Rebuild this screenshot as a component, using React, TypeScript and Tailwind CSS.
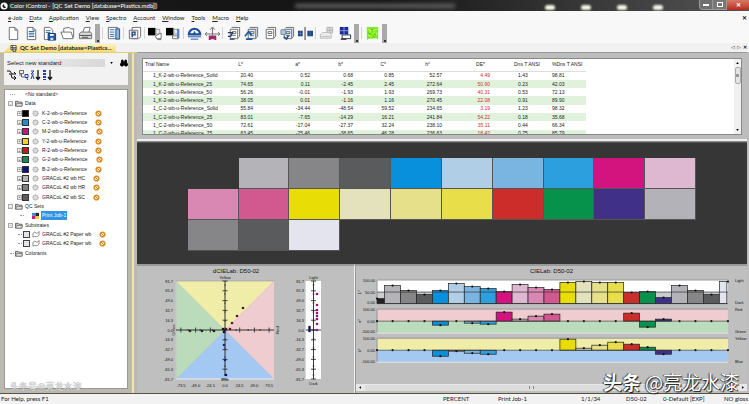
import { ReactNode } from "react";
import { Binoculars } from "lucide-react";

const menus = ["e-Job", "Data", "Application", "View", "Spectro", "Account", "Window", "Tools", "Macro", "Help"];

// Header and body cells carry their own alignment per column
const columns = [
  { title: "Trial Name", head: "pl-0.5 text-left", cell: "pl-2.5" },
  { title: "L*", head: "pr-2.5 text-right", cell: "text-right" },
  { title: "a*", head: "pr-2.5 text-right", cell: "text-right" },
  { title: "b*", head: "pr-2.5 text-right", cell: "text-right" },
  { title: "C*", head: "pr-2 text-right", cell: "text-right" },
  { title: "h°", head: "pr-3 text-right", cell: "text-right" },
  { title: "DE*", head: "pr-[5px] text-right", cell: "text-right text-[#d02c2c]" },
  { title: "Dns T ANSI", head: "pl-6 text-left", cell: "pl-7" },
  { title: "%Dns T ANSI", head: "pl-2 text-left", cell: "pl-2" },
];

const trials = [
  ["1_K-2-wb-u-Reference_Solid", "20.40", "0.52", "0.68", "0.85", "52.57", "4.49", "1.43", "98.81"],
  ["1_K-2-wb-u-Reference_25", "74.65", "0.11", "-2.45", "2.45", "272.64", "50.90", "0.23", "42.03"],
  ["1_K-2-wb-u-Reference_50", "56.26", "-0.01", "-1.93", "1.93", "269.73", "40.31", "0.53", "72.13"],
  ["1_K-2-wb-u-Reference_75", "38.05", "0.01", "-1.16", "1.16", "270.45", "22.08", "0.91", "89.90"],
  ["1_C-2-wb-u-Reference_Solid", "55.84", "-34.44", "-48.54", "59.52", "234.65", "3.19", "1.23", "98.32"],
  ["1_C-2-wb-u-Reference_25", "83.01", "-7.65", "-14.29", "16.21", "241.84", "54.22", "0.18", "35.68"],
  ["1_C-2-wb-u-Reference_50", "72.61", "-17.04", "-27.37", "32.24", "238.10", "35.11", "0.44", "66.34"],
  ["1_C-2-wb-u-Reference_75", "63.45", "-25.46", "-38.65", "46.28", "236.63", "18.42", "0.75", "85.79"],
];

const references = [
  { name: "K-2-wb-u-Reference", color: "#000000" },
  { name: "C-2-wb-u-Reference", color: "#1592c8" },
  { name: "M-2-wb-u-Reference", color: "#d0107c" },
  { name: "Y-2-wb-u-Reference", color: "#f0d818" },
  { name: "R-2-wb-u-Reference", color: "#d01414" },
  { name: "G-2-wb-u-Reference", color: "#108c54" },
  { name: "B-2-wb-u-Reference", color: "#10107c" },
  { name: "GRACoL #2 wb HC", color: "#b4b4b4" },
  { name: "GRACoL #2 wb HR", color: "#808080" },
  { name: "GRACoL #2 wb SC", color: "#5c5c5c" },
];

// L, a and b are bar heights in chart units
const patches = [
  { color: "#222222", L: 5, a: 0, b: 0 },
  { color: "#b4b4b8", L: 18, a: 0, b: 0 },
  { color: "#868688", L: 13, a: 0, b: 0 },
  { color: "#5a5b5c", L: 9, a: 0, b: 0 },
  { color: "#0890dc", L: 13, a: -4, b: -6 },
  { color: "#b0cfe6", L: 20, a: 0, b: -1 },
  { color: "#7ab4e0", L: 17, a: -2, b: -3 },
  { color: "#2ca0de", L: 15, a: -3, b: -4 },
  { color: "#d4147e", L: 12, a: 9, b: 0 },
  { color: "#deb8d0", L: 19, a: 2, b: 0 },
  { color: "#d888b2", L: 16, a: 5, b: 0 },
  { color: "#d25890", L: 14, a: 7, b: 0 },
  { color: "#e8de06", L: 21, a: 0, b: 11 },
  { color: "#e4e2bc", L: 22, a: 0, b: 2 },
  { color: "#e6e08a", L: 21, a: 0, b: 5 },
  { color: "#e8de4a", L: 21, a: 0, b: 8 },
  { color: "#cc2c2a", L: 11, a: 8, b: 6 },
  { color: "#06924a", L: 12, a: -6, b: 3 },
  { color: "#403088", L: 6, a: 2, b: -4 },
  { color: "#b2b2b8", L: 18, a: 0, b: 0 },
  { color: "#868688", L: 13, a: 0, b: 0 },
  { color: "#5a5b5c", L: 9, a: 0, b: 0 },
  { color: "#e4e4ee", L: 22, a: 0, b: 0 },
];

const scale = ["81.7", "65.3", "49.0", "32.7", "16.3", "0.0", "-16.3", "-32.7", "-49.0", "-65.3", "-81.7"];

const scatter = [
  [105, 42, "#50103c"], [99, 50, "#601048"], [94, 57, "#601048"], [92, 63, "#601030"], [88, 63, "#601030"],
  [76, 65, "#401030"], [64, 65, "#202040"], [52, 65, "#501028"], [86, 79, "#202070"], [87, 94, "#202070"],
  [88, 109, "#101060"], [86, 66, "#101030"], [85, 63, "#101030"],
] as const;

function Icon({ children, label }: { children: ReactNode; label: string }) {
  return (
    <button type="button" aria-label={label} className="flex h-4 w-[18px] items-center justify-center">
      <svg viewBox="0 0 16 16" className="h-[15px] w-[15px]" fill="none" stroke="#6c6c6c">
        {children}
      </svg>
    </button>
  );
}

const Separator = () => <div className="flex w-[3px] justify-center"><div className="h-3 w-px bg-[#d4d4d4]" /></div>;

const Handle = () => (
  <div className="mx-px flex h-[19px] w-[5px] items-end justify-center bg-[#a9a9a9] pb-px">
    <div className="h-0.5 w-0.5 bg-[#333]" />
  </div>
);

// Stacked pages used by several of the toolbar icons
const Pages = ({ fill = "#fff" }: { fill?: string }) => (
  <>
    <path d="M6 1.500h8.500v9.500l-2 2" fill={fill} />
    <path d="M4.500 3.500h8v10h-8z" fill={fill} />
    <path d="M6.500 6h4v2h-4zM6.500 10h4" />
  </>
);

function Toolbar() {
  return (
    <div className="flex h-5 items-center bg-[#f8f8f8] pl-1">
      <Icon label="New"><path d="M3.500 1.500h6l3 3v10h-9zM9.500 1.500v3h3" fill="#fff" /></Icon>
      <Icon label="New standard">
        <path d="M3.500 1.500h6l3 3v10h-9zM9.500 1.500v3h3" fill="#fff" />
        <path d="M5 6h6M5 8.500h6M5 11h6" stroke="#2c6aa8" strokeWidth="1.300" />
      </Icon>
      <Icon label="Save">
        <path d="M2.500 1.500h6l3 3v10h-9z" fill="#fff" />
        <path d="M4 5h5M4 7h5" stroke="#2c6aa8" />
        <path d="M6.500 8h8v7h-8z" fill="#2458a0" stroke="#1c3c70" />
        <path d="M8.500 8.500h4v2h-4z" fill="#fff" stroke="none" />
        <path d="M9 12.500h3v2.500H9z" fill="#cde" stroke="none" />
      </Icon>
      <Icon label="Open">
        <path d="M4 6.500v-4l6-1 1 1.500h3.500v9" fill="#fff" />
        <path d="M1 6.500h11l2 7H3.500z" fill="#fff" />
      </Icon>
      <Icon label="Print">
        <path d="M5 7l2-5.500h6L11.500 7" fill="#fff" />
        <path d="M1.500 8l2-1.500h10l1 1.500v5.500h-13z" fill="#ddd" />
        <path d="M2 10h12M4 12h7" stroke="#444" />
      </Icon>
      <Handle />
      <Separator />
      <Icon label="Report">
        <path d="M2.500 1.500h10v12h-10z" fill="#fff" />
        <path d="M4 4h5M4 6.500h5M4 9h5M4 11h5" stroke="#2c6aa8" />
        <path d="M10.500 3h4v11h-4z" fill="#8db6e0" stroke="#24508c" />
      </Icon>
      <Separator />
      <Icon label="Page setup">
        <path d="M5.500 1.500h9v10l-2 2h-7z" fill="#fff" />
        <path d="M2.500 4.500h9v9h-9z" fill="#eef" />
        <path d="M5.500 12V6.500h3v3h-3" stroke="#204a80" strokeWidth="1.500" />
      </Icon>
      <Separator />
      <Icon label="Measure standard">
        <path d="M0 2h8v8H0z" fill="#000" stroke="none" />
        <path d="M8.500 3.500h4v5h-4z" fill="#eee" stroke="#999" />
        <path d="M8 10.500l6-3v6h-5z" fill="#fff" /><path d="M10 14.500h4" />
      </Icon>
      <Icon label="Measure trial">
        <path d="M0 2h8v8H0z" fill="#000" stroke="none" />
        <path d="M8.500 3.500h4v5h-4z" fill="#eee" stroke="#999" />
        <path d="M7 10.500h6v3H7z" fill="#fff" />
        <path d="M13 3v10" stroke="#5585c8" strokeWidth="2.500" />
      </Icon>
      <Separator />
      <Icon label="Calibrate">
        <path d="M2 9a6 6 0 0 1 12 0z" fill="#fff" stroke="#2050a0" strokeWidth="2.500" />
        <path d="M8 5l-2 4h4z" fill="#2050a0" stroke="none" />
        <path d="M1 11.500h14M4 14h8" stroke="#2050a0" />
      </Icon>
      <Icon label="Tolerance">
        <path d="M8 10V2M5.500 4L8 1l2.500 3M0 8.500h16M2 6.500L0 8.500l2 2M14 6.500l2 2-2 2" />
        <path d="M5 15v-4h2v2h2v-2h2v4" stroke="#a0286c" strokeWidth="2" />
      </Icon>
      <Separator />
      <Icon label="Copy measurement"><Pages /><path d="M2 7h5l-2 4H2M4 14h5" stroke="#203c68" strokeWidth="1.400" /></Icon>
      <Icon label="Store measurement"><Pages fill="#dce9f6" /><path d="M1 11l4-5 3 4M2 14h7" stroke="#1c5a98" strokeWidth="1.800" /></Icon>
      <Icon label="Pages"><Pages /></Icon>
      <Icon label="Store pages"><Pages fill="#dce9f6" /><path d="M1 4h5v5H1z" fill="#a8c8e6" stroke="#789" /><path d="M4 11.500l3 2.500 2-4" stroke="#1c4c80" strokeWidth="1.600" /></Icon>
      <Icon label="Compare">
        <path d="M0 5h5v6H0zM10 5h6v6h-6z" fill="#1c4484" stroke="none" />
        <path d="M7.500 1v14" stroke="#333" /><path d="M2.500 5v6M0 8h5M13 5v6" stroke="#6c90c8" strokeWidth=".6" />
      </Icon>
      <Separator />
      <Icon label="Print preview">
        <path d="M8.500 1.500h6v6h-6zM11.500 1.500v6M8.500 4.500h6" fill="#ddd" stroke="#b0b0b0" />
        <path d="M2 9l2-2h7l2 2v4H1.500V9zM3 11h9" fill="#eee" stroke="#b8b8b8" />
      </Icon>
      <Icon label="Print job">
        <path d="M3 1h9v8H3z" fill="#1c2a98" stroke="none" />
        <path d="M7.500 1v8M3 5h9" stroke="#8ca0e0" />
        <path d="M5.500 9.500h9v4h-9z" fill="#fff" stroke="#234" /><path d="M4 14h6" stroke="#234" strokeWidth="1.500" />
      </Icon>
      <Handle />
      <Separator />
      <Icon label="Color map">
        <path d="M2 1h12v13l-2-1-8 .5L2 15z" fill="#7ce820" stroke="none" />
        <path d="M3 3l3 2M7 2l-2 6M9 5l4-2M8 9l3-3M11 11l2-4M3 10l4 1" stroke="#d8ff50" />
        <path d="M6 3l2 1M10 8l1 2M4 7l2 2M9 11l1 1" stroke="#20a848" />
      </Icon>
      <Handle />
    </div>
  );
}

function TitleBar() {
  return (
    <header className="relative flex h-[11px] items-center overflow-hidden bg-linear-to-r from-[#181818] via-[#151515] to-[#555] font-[Lato,sans-serif] text-[6px] text-white">
      <div className="absolute inset-0 flex items-center gap-[26px] pl-[545px]">
        {[0, 1, 2, 3].map((i) => (
          <span key={i} className="mt-1 h-[5px] w-2.5 rounded-full bg-[#f4f4e4] blur-[1px]" />
        ))}
      </div>
      <div className="absolute inset-0 flex items-center pl-[295px]">
        <span className="h-1 w-[160px] bg-[#666] blur-[2px]" />
      </div>
      <svg viewBox="0 0 10 10" className="relative h-2 w-[9px]">
        <circle cx="4.500" cy="5" r="4.500" fill="#f4f4f4" />
        <path d="M4.500 2.500A2.500 2.500 0 1 0 7 6.500L4.500 5z" fill="#111" />
      </svg>
      <h1 className="relative rounded-full bg-[#55555588] px-px leading-[8px] whitespace-nowrap">
        Color iControl - [QC Set Demo [database=Plastics.mdb]]
      </h1>
      <div className="relative ml-auto flex h-2.5 self-start text-[6px] leading-none">
        <button type="button" aria-label="Minimize" className="flex w-3.5 items-center justify-center rounded-bl-sm border border-t-0 border-[#999] bg-[#707070]">
          <span className="h-0.5 w-1.5 bg-white" />
        </button>
        <button type="button" aria-label="Restore" className="flex w-3.5 items-center justify-center border-r border-b border-[#999] bg-[#787878]">
          <span className="h-[5px] w-1.5 border border-white" />
        </button>
        <button type="button" aria-label="Close" className="w-[22px] rounded-br-sm bg-linear-to-b from-[#d87868] to-[#b82818] font-bold">✕</button>
      </div>
    </header>
  );
}

function Recycle() {
  return (
    <svg viewBox="0 0 8 8" className="ml-2 h-[7px] w-[7px] shrink-0">
      <circle cx="4" cy="4" r="2.700" fill="#fff3d8" stroke="#e08c20" strokeWidth="1.700" />
      <path d="M2.500 2.500l3 3" stroke="#c87010" strokeWidth="1" />
    </svg>
  );
}

function Folder() {
  return (
    <svg viewBox="0 0 9 8" className="mr-0.5 h-[7px] w-2 shrink-0">
      <path d="M.5 7V1.500h3l1 1H8V7z" fill="#bbb" stroke="#444" strokeWidth=".8" />
      <path d="M2 4h6.500L7.500 7H.7z" fill="#ddd" stroke="#555" strokeWidth=".6" />
    </svg>
  );
}

function Expander({ sign }: { sign: string }) {
  return (
    <button type="button" aria-label="Toggle" className="mr-0.5 flex h-[5px] w-[5px] shrink-0 items-center justify-center border border-[#aaa] bg-[#eee] text-[4px] leading-none text-black">
      {sign}
    </button>
  );
}

function Branch({ label, open = true }: { label: string; open?: boolean }) {
  return (
    <li className="flex flex-1 items-center pl-[3px]">
      {open ? <Expander sign="-" /> : <span className="mr-px ml-0.5 w-1 border-t border-dotted border-[#999]" />}
      <Folder />
      {label}
    </li>
  );
}

function Sidebar() {
  return (
    <aside className="flex w-[137px] shrink-0 flex-col border-t border-[#dcd070] bg-[#bcbab0] pr-[3px] pl-1">
      <div className="flex flex-1 flex-col border-r-2 border-[#eeeaa0] pb-1">
        <div className="mr-1 h-8 bg-[#f2f2f2] pt-[5px] pl-[3px]">
          <div className="flex h-[9px] items-center">
            <select
              aria-label="Standard"
              className="h-2 w-[98px] appearance-none bg-linear-to-r from-[#f2f2f2] to-[#d8d8d8] text-[6px] leading-[8px] text-[#222]"
            >
              <option>Select new standard</option>
            </select>
            <svg viewBox="0 0 4 3" className="ml-[5px] h-0.5 w-[3px]"><path d="M0 0h4L2 3z" /></svg>
            <button type="button" aria-label="Find" className="ml-[7px]">
              <Binoculars className="h-2 w-2 fill-black text-black" strokeWidth={3} />
            </button>
          </div>
          <svg viewBox="0 0 50 12" className="mt-0.5 h-3 w-[50px]" fill="none" stroke="#111">
            <path d="M0 2h3l2 3h4M2 5h2l1 4h3M7 7l2 2-2 2M7 3l2 2" />
            <path d="M12.500 1.500h4v3h-4zM14.500 5v3h3M12 6h2" stroke="#666" />
            <path d="M18 5.500h3v3h-3zM19 8l2 3" stroke="#2838a0" />
            <path d="M24 2h3l-3 3h3M24 10l1.500-4 1.500 4" stroke="#2838a0" />
            <path d="M31 1v9M29 8l2 2.500L33 8M43 1v9M41 8l2 2.500L45 8" strokeWidth="1.300" />
            <path d="M37.500 1v10" stroke="#2838b0" strokeWidth="3" strokeDasharray="2 1" />
          </svg>
        </div>
        <div className="mt-1 mr-1 flex-1 border border-[#999] bg-white">
          <ul className="flex h-[168px] flex-col text-[5px] leading-[7px] whitespace-nowrap text-[#222]">
            <li className="flex flex-1 items-center pl-[5px]">
              <span className="mr-2.5 w-[5px] border-t border-dotted border-[#999]" />
              &lt;No standard&gt;
            </li>
            <Branch label="Data" />
            {references.map((r) => (
              <li key={r.name} className="flex flex-1 items-center pl-3">
                <Expander sign="+" />
                <span className="-ml-0.5 h-[7px] w-[7px] shrink-0 border border-[#333]" style={{ background: r.color }} />
                <svg viewBox="0 0 8 8" className="mx-[3px] h-[7px] w-[7px] shrink-0">
                  <circle cx="4" cy="4" r="2.800" fill="#ddd" stroke="#aaa" strokeWidth="1.500" strokeDasharray="1.500 .5" />
                </svg>
                {r.name}
                <Recycle />
              </li>
            ))}
            <Branch label="QC Sets" />
            <li className="flex flex-1 items-center pl-[15px]">
              <span className="mr-2 w-1 border-t border-dotted border-[#999]" />
              <svg viewBox="0 0 8 8" className="mr-0.5 h-[7px] w-[7px]">
                <path d="M0 1h4v3H0z" fill="#189cd8" /><path d="M4 1h4v4H4z" fill="#222" />
                <path d="M0 4h4v4H0z" fill="#d01480" /><path d="M4 5h4v3H4z" fill="#e8d818" />
              </svg>
              <span className="bg-[#3093e4] px-px leading-[9px] text-white">Print Job-1</span>
            </li>
            <Branch label="Substrates" />
            {["a", "b"].map((id) => (
              <li key={id} className="flex flex-1 items-center pl-[13px]">
                <span className="mr-px w-1 border-t border-dotted border-[#999]" />
                <span className="h-[7px] w-[7px] shrink-0 border border-[#444] bg-[#e4e4e8]" />
                <svg viewBox="0 0 9 8" className="mr-0.5 ml-0.5 h-[7px] w-2 shrink-0">
                  <path d="M1 7V2.500q2-2.500 4 0q2 .5 3-2v4q-1 2-3 2q-2-1-4 .5z" fill="#fff" stroke="#666" strokeWidth=".8" />
                </svg>
                GRACoL #2 Paper wb
                <Recycle />
              </li>
            ))}
            <Branch label="Colorants" open={false} />
          </ul>
        </div>
      </div>
    </aside>
  );
}

function TrialTable() {
  return (
    <div className="h-[89px] border-t border-b-2 border-t-[#999] border-b-[#eee] bg-[#bdbdbd] px-[5px] pt-[5px]">
      <div className="flex h-[77px] items-start overflow-hidden border border-[#888] bg-white">
        <table className="h-[79px] w-[443px] shrink-0 table-fixed border-collapse text-[5px] leading-[7px] whitespace-nowrap text-[#222]">
          <colgroup>
            <col className="w-[82px]" />
            <col className="w-[28px]" />
            <col className="w-[57px]" />
            <col className="w-[43px]" />
            <col className="w-[41px]" />
            <col className="w-[48px]" />
            <col className="w-[48px]" />
            <col className="w-[54px]" />
            <col />
          </colgroup>
          <thead>
            <tr className="h-3 border-b border-[#ddd]">
              {columns.map((c) => (
                <th key={c.title} className={`font-normal ${c.head}`}>{c.title}</th>
              ))}
            </tr>
          </thead>
          <tbody>
            {trials.map((t) => (
              <tr key={t[0]} className="even:bg-[#e0f2dc]">
                {t.map((v, i) => (
                  <td key={i} className={columns[i].cell}>{v}</td>
                ))}
              </tr>
            ))}
          </tbody>
        </table>
        <div className="ml-auto flex h-full w-[7px] flex-col items-center justify-between bg-[#f0f0f0] py-[3px] text-[#444]">
          <svg viewBox="0 0 4 3" className="h-0.5 w-[3px]"><path d="M0 3h4L2 0z" /></svg>
          <span className="mt-[3px] mb-auto flex h-[17px] w-[6px] items-center justify-center rounded-xs border border-[#aaa] bg-[#e4e4e4]">
            <span className="h-[3px] w-[3px] bg-[#999]" />
          </span>
          <svg viewBox="0 0 4 3" className="h-0.5 w-[3px]"><path d="M0 0h4L2 3z" /></svg>
        </div>
      </div>
    </div>
  );
}

function Swatches() {
  return (
    <div className="grid h-[122px] auto-rows-[31px] grid-cols-12 border-t border-[#555] bg-[#363636] pt-[15px]">
      {patches.map((p, i) => (
        <div
          key={i}
          className={
            i === 0
              ? "col-start-2"
              : i % 10 === 0
                ? "col-start-2 border-r border-b border-[#555]"
                : "border-r border-b border-[#555]"
          }
          style={{ background: i === 0 ? "#363636" : p.color }}
        />
      ))}
    </div>
  );
}

function ScatterChart() {
  return (
    <svg viewBox="0 0 215 126" className="h-[126px] w-[215px]" fontFamily="Liberation Sans, sans-serif" fontSize="4" fill="#111">
      <text x="98" y="7" fontSize="6" textAnchor="middle">dCIELab: D50-02</text>
      <path d="M38 15h98L87 64z" fill="#efeda8" />
      <path d="M136 15v98L87 64z" fill="#efcccf" />
      <path d="M38 113h98L87 64z" fill="#a3c8f2" />
      <path d="M38 15v98l49-49z" fill="#bbdcbb" />
      <path d="M38 15v98h98M168 15v98" fill="none" stroke="#eee" />
      <path d="M38 15v98M38 15h98" fill="none" stroke="#999" strokeWidth=".6" />
      <rect x="168" y="15" width="15" height="98" fill="#fff" />
      <path d="M87 15v95M38 64h98M175.500 15v98M168 64h15" stroke="#222" strokeWidth=".9" />
      {scale.map((s, i) => (
        <g key={s}>
          <text x="35" y={16.500 + i * 9.800} textAnchor="end">{s}</text>
          <text x="166" y={16.500 + i * 9.800} textAnchor="end">{s}</text>
          <path d={`M84.500 ${15 + i * 9.800}h5M173 ${15 + i * 9.800}h5`} stroke="#222" strokeWidth=".8" />
          <path d={`M86 ${19 + i * 9}h2M174.500 ${19 + i * 9}h2`} stroke="#222" strokeWidth=".6" />
        </g>
      ))}
      {["-73.5", "-49.0", "-24.5", "0.0", "24.5", "49.0", "73.5"].map((s, i) => (
        <g key={s}>
          <text x={42.900 + i * 14.700} y="121" textAnchor="middle">{s}</text>
          <path d={`M${42.900 + i * 14.700} 61.500v5M${50.200 + i * 12} 63v2`} stroke="#222" strokeWidth=".8" />
        </g>
      ))}
      <text x="87" y="13" textAnchor="middle">Yellow</text>
      <text x="87" y="115" textAnchor="middle">Blue</text>
      <text x="37" y="64" textAnchor="middle" transform="rotate(-90 37 64)">Green</text>
      <text x="141" y="64" textAnchor="middle" transform="rotate(-90 141 64)">Red</text>
      <text x="175.500" y="13" textAnchor="middle">Light</text>
      <text x="175.500" y="119" textAnchor="middle">Dark</text>
      {scatter.map(([x, y, c]) => (
        <circle key={`${x}-${y}`} cx={x} cy={y} r="1.300" fill={c} />
      ))}
      {[28, 39, 44, 47, 50, 53, 58, 64].map((y) => (
        <circle key={y} cx="179" cy={y} r="1.300" fill="#941484" />
      ))}
      {[61, 63, 65].map((y) => (
        <circle key={y} cx="171.500" cy={y} r="1.300" fill="#101050" />
      ))}
    </svg>
  );
}

// Left edge and width of the nth bar; the first and the last are cut by the frame
const barX = (i: number) => (i === 0 ? 21 : 28.500 + (i - 1) * 15.900);
const barWidth = (i: number) => (i === 0 || i === patches.length - 1 ? 7.500 : 15.900);

function Bars({ base, channel }: { base: number; channel: "L" | "a" | "b" }) {
  return (
    <g>
      {patches.map((p, i) => {
        const v = p[channel];
        const x = barX(i);
        const cx = i === 0 ? x : i === patches.length - 1 ? 371 : x + 8;
        return (
          <g key={i}>
            <rect x={x} y={v > 0 ? base - v : base} width={barWidth(i)} height={Math.abs(v)} fill={p.color} stroke="#222" strokeWidth=".7" />
            <circle cx={cx} cy={base - v} r="1.100" fill="#111" />
          </g>
        );
      })}
    </g>
  );
}

function BarChart() {
  return (
    <svg viewBox="0 0 390 118" className="w-full" fontFamily="Liberation Sans, sans-serif" fontSize="4" fill="#111">
      <text x="195" y="7" fontSize="6" textAnchor="middle">CIELab: D50-02</text>
      <path d="M21 14h350v12H21z" fill="#fff" />
      <path d="M21 26h350v11.500H21z" fill="#c9ccd0" />
      <path d="M21 43h350v12H21z" fill="#efcccf" />
      <path d="M21 55h350v11.500H21z" fill="#bbdcbb" />
      <path d="M21 72h350v12H21z" fill="#efeda8" />
      <path d="M21 84h350v11.500H21z" fill="#a3c8f2" />
      <path d="M21 14h350M21 43h350M21 72h350M21 14v23.500M21 43v23.500M21 72v23.500" stroke="#888" strokeWidth=".8" />
      <path d="M21 67h350M21 96h350" stroke="#eee" strokeWidth=".8" />
      <Bars base={37.5} channel="L" />
      <Bars base={55} channel="a" />
      <Bars base={84} channel="b" />
      <path d="M21 26h350" stroke="#333" strokeWidth=".7" />
      <path d="M21 55h350M21 84h350M21 37.500h350" stroke="#333" strokeWidth=".6" />
      {[
        ["100.00", 15.5], ["50.00", 27.5], ["0.00", 38], ["100.00", 44.5], ["0.00", 56.5], ["-100.00", 67],
        ["100.00", 73.5], ["0.00", 85.5], ["-100.00", 97],
      ].map(([s, y]) => (
        <text key={y} x="19" y={y} textAnchor="end">{s}</text>
      ))}
      {[
        ["Light", 15.5], ["Dark", 38], ["Red", 44.5], ["Green", 67], ["Yellow", 73.5], ["Blue", 97],
      ].map(([s, y]) => (
        <text key={s} x="378" y={y}>{s}</text>
      ))}
      {[["L*", 26], ["a*", 55], ["b*", 84]].map(([s, y]) => (
        <text key={s} x="5" y={y} textAnchor="middle" transform={`rotate(-90 5 ${y})`}>{s}</text>
      ))}
    </svg>
  );
}

export default function App() {
  return (
    <div className="relative flex min-h-screen flex-col overflow-hidden bg-[#f4f4f4] font-[Liberation_Sans,Arial,sans-serif] text-[#222]">
      <TitleBar />
      <nav className="flex h-3 items-center gap-[7px] bg-[#f8f8f8] pt-px pr-0.5 pl-2 font-[Lato,sans-serif] text-[6px] leading-[8px]">
        {menus.map((m) => (
          <button key={m} type="button" className="first-letter:underline">{m}</button>
        ))}
        <button type="button" aria-label="Close document" className="ml-auto font-bold">✕</button>
      </nav>
      <Toolbar />
      <div className="flex h-[9px] items-end bg-[#f1f1f1] pr-0.5 pl-1 font-[Open_Sans,sans-serif] text-[5px] leading-[8px]">
        <button
          type="button"
          className="flex h-2 items-center gap-[3px] bg-linear-to-b from-[#fdf3c0] to-[#f4d874] pr-1 pl-1.5 font-[Lato,sans-serif] text-[6px] font-bold whitespace-nowrap [clip-path:polygon(7px_0,100%_0,100%_100%,0_100%)]"
        >
          <svg viewBox="0 0 8 8" className="h-[7px] w-[7px]" fill="#fff" stroke="#333" strokeWidth=".9">
            <path d="M1 .5h6v5H1zM3 .5v5M1 3h6" /><path d="M3.500 4.500h3v3h-3z" fill="#ddd" />
          </svg>
          QC Set Demo [database=Plastics...
        </button>
        <div className="ml-auto flex gap-0.5 self-start text-[5px]">
          <button type="button" aria-label="Previous tab">◁</button>
          <button type="button" aria-label="Next tab">▷</button>
          <button type="button" aria-label="Close tab" className="font-bold">✕</button>
        </div>
      </div>

      <main className="flex flex-1">
        <Sidebar />
        <div className="flex min-w-0 flex-1 flex-col bg-[#bdbdbd] pr-0.5">
          <TrialTable />
          <div className="h-px bg-[#8a8a8a]" />
          <Swatches />
          <div className="flex flex-1">
            <div className="w-[218px] shrink-0 border-t-2 border-r border-t-[#999] border-r-[#eee] bg-[#bfbfbf] pl-px">
              <ScatterChart />
            </div>
            <div className="flex min-w-0 flex-1 flex-col border-t-2 border-l border-[#999] bg-[#bfbfbf]">
              <BarChart />
              <div className="mt-auto mb-0.5 flex h-[7px] items-center justify-between bg-[#e8e8e8] px-[3px]">
                <svg viewBox="0 0 3 4" className="h-[3px] w-0.5"><path d="M3 0v4L0 2z" /></svg>
                <span className="mx-1 flex h-1.5 flex-1 items-center justify-center rounded-xs bg-[#dcdcdc]">
                  <span className="mr-10 h-[3px] w-[5px] border-x border-[#888]" />
                </span>
                <svg viewBox="0 0 3 4" className="h-[3px] w-0.5"><path d="M0 0v4l3-2z" /></svg>
              </div>
            </div>
          </div>
        </div>
      </main>

      <footer className="flex h-[11px] items-center border-t border-[#55553f] bg-[#f2f2f2] pl-px font-[Lato,sans-serif] text-[6px] leading-[8px] whitespace-nowrap">
        <span className="flex-1">For Help, press F1</span>
        <span className="w-[55px]">PERCENT</span>
        <span className="w-[83px]">Print Job-1</span>
        <span className="w-[45px]">1/1/34</span>
        <span className="w-[37px]">D50-02</span>
        <span className="w-[61px]">0-Default [EXP]</span>
        <span className="w-[25px]">NO gloss</span>
      </footer>

      <span className="absolute bottom-3 left-2.5 font-['Noto_Sans_CJK_SC',sans-serif] text-[9px] leading-[10px] text-[#e8e8e8] [text-shadow:0_0_1px_#666]">
        头条号@亮龙水漆
      </span>
      <span className="absolute right-2.5 bottom-2.5 flex gap-1 font-['Noto_Sans_CJK_SC',sans-serif] text-[19px] leading-[24px] text-white [text-shadow:1px_1px_1px_#111,-1px_0_1px_#333]">
        <b>头条</b>
        <span>@亮龙水漆</span>
      </span>
    </div>
  );
}
